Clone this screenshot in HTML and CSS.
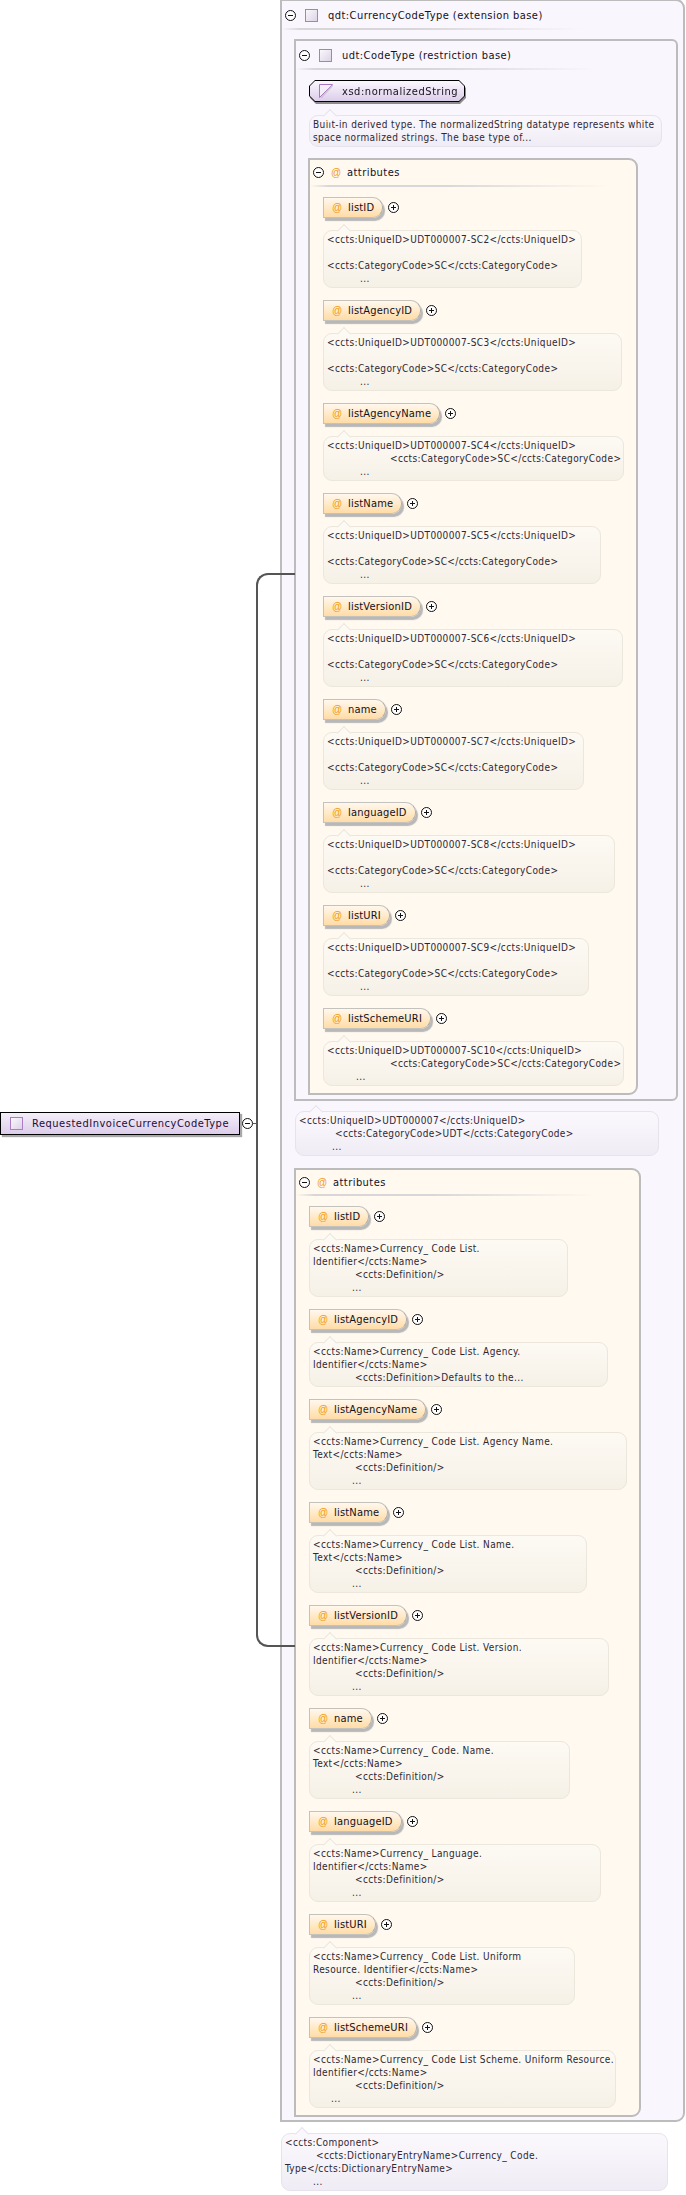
FILE: index.html
```html
<!DOCTYPE html>
<html lang="en">
<head>
<meta charset="utf-8">
<title>RequestedInvoiceCurrencyCodeType</title>
<link rel="stylesheet" href="styles.css">
</head>
<body>
<div class="canvas">
  <div class="root-col">
    <div class="root-row">
      <div class="root-node"><span class="sq"></span><span>RequestedInvoiceCurrencyCodeType</span></div>
      <span class="tg"></span>
    </div>
  </div>
  <div class="bracket"></div>
  <div class="tick"></div>

  <div class="tree-col">
    <div class="box outer">
      <div class="hdr"><span class="tg"></span><span class="sq"></span><span>qdt:CurrencyCodeType (extension base)</span></div>

      <div class="box udt">
        <div class="hdr"><span class="tg"></span><span class="sq"></span><span>udt:CodeType (restriction base)</span></div>
        <div class="simple">
          <div class="simple-edge"><div class="simple-in">
            <svg class="simple-ic" width="14" height="14" viewBox="0 0 14 14"><path d="M.5.5H13.5L.5 13.5Z" fill="#f3eef8" stroke="#a877c0"/><path d="M14 1 2 14" stroke="#c9c2cf" stroke-width="1.5"/></svg>
            <span>xsd:normalizedString</span>
          </div></div>
        </div>
        <div class="note lilac n-xsd">
          <span class="ln">Built-in derived type. The normalizedString datatype represents white</span>
          <span class="ln">space normalized strings. The base type of...</span>
        </div>

        <div class="box attrs a1">
          <div class="hdr"><span class="tg"></span><span class="at">@</span><span>attributes</span></div>

          <div class="attr"><div class="pill"><span class="at">@</span><span>listID</span></div><span class="tg plus"></span></div>
          <div class="note w259"><span class="ln">&lt;ccts:UniqueID&gt;UDT000007-SC2&lt;/ccts:UniqueID&gt;</span><span class="ln"></span><span class="ln">&lt;ccts:CategoryCode&gt;SC&lt;/ccts:CategoryCode&gt;</span><span class="ln i33">...</span></div>

          <div class="attr"><div class="pill"><span class="at">@</span><span>listAgencyID</span></div><span class="tg plus"></span></div>
          <div class="note w299"><span class="ln">&lt;ccts:UniqueID&gt;UDT000007-SC3&lt;/ccts:UniqueID&gt;</span><span class="ln"></span><span class="ln">&lt;ccts:CategoryCode&gt;SC&lt;/ccts:CategoryCode&gt;</span><span class="ln i33">...</span></div>

          <div class="attr"><div class="pill"><span class="at">@</span><span>listAgencyName</span></div><span class="tg plus"></span></div>
          <div class="note w301"><span class="ln">&lt;ccts:UniqueID&gt;UDT000007-SC4&lt;/ccts:UniqueID&gt;</span><span class="ln i63">&lt;ccts:CategoryCode&gt;SC&lt;/ccts:CategoryCode&gt;</span><span class="ln i33">...</span></div>

          <div class="attr"><div class="pill"><span class="at">@</span><span>listName</span></div><span class="tg plus"></span></div>
          <div class="note w278"><span class="ln">&lt;ccts:UniqueID&gt;UDT000007-SC5&lt;/ccts:UniqueID&gt;</span><span class="ln"></span><span class="ln">&lt;ccts:CategoryCode&gt;SC&lt;/ccts:CategoryCode&gt;</span><span class="ln i33">...</span></div>

          <div class="attr"><div class="pill"><span class="at">@</span><span>listVersionID</span></div><span class="tg plus"></span></div>
          <div class="note w300"><span class="ln">&lt;ccts:UniqueID&gt;UDT000007-SC6&lt;/ccts:UniqueID&gt;</span><span class="ln"></span><span class="ln">&lt;ccts:CategoryCode&gt;SC&lt;/ccts:CategoryCode&gt;</span><span class="ln i33">...</span></div>

          <div class="attr"><div class="pill"><span class="at">@</span><span>name</span></div><span class="tg plus"></span></div>
          <div class="note w261"><span class="ln">&lt;ccts:UniqueID&gt;UDT000007-SC7&lt;/ccts:UniqueID&gt;</span><span class="ln"></span><span class="ln">&lt;ccts:CategoryCode&gt;SC&lt;/ccts:CategoryCode&gt;</span><span class="ln i33">...</span></div>

          <div class="attr"><div class="pill"><span class="at">@</span><span>languageID</span></div><span class="tg plus"></span></div>
          <div class="note w292"><span class="ln">&lt;ccts:UniqueID&gt;UDT000007-SC8&lt;/ccts:UniqueID&gt;</span><span class="ln"></span><span class="ln">&lt;ccts:CategoryCode&gt;SC&lt;/ccts:CategoryCode&gt;</span><span class="ln i33">...</span></div>

          <div class="attr"><div class="pill"><span class="at">@</span><span>listURI</span></div><span class="tg plus"></span></div>
          <div class="note w266"><span class="ln">&lt;ccts:UniqueID&gt;UDT000007-SC9&lt;/ccts:UniqueID&gt;</span><span class="ln"></span><span class="ln">&lt;ccts:CategoryCode&gt;SC&lt;/ccts:CategoryCode&gt;</span><span class="ln i33">...</span></div>

          <div class="attr"><div class="pill"><span class="at">@</span><span>listSchemeURI</span></div><span class="tg plus"></span></div>
          <div class="note w301"><span class="ln">&lt;ccts:UniqueID&gt;UDT000007-SC10&lt;/ccts:UniqueID&gt;</span><span class="ln i63">&lt;ccts:CategoryCode&gt;SC&lt;/ccts:CategoryCode&gt;</span><span class="ln i29">...</span></div>
        </div>
      </div>

      <div class="note lilac n-udt"><span class="ln">&lt;ccts:UniqueID&gt;UDT000007&lt;/ccts:UniqueID&gt;</span><span class="ln i36">&lt;ccts:CategoryCode&gt;UDT&lt;/ccts:CategoryCode&gt;</span><span class="ln i33">...</span></div>

      <div class="box attrs a2">
        <div class="hdr"><span class="tg"></span><span class="at">@</span><span>attributes</span></div>

        <div class="attr"><div class="pill"><span class="at">@</span><span>listID</span></div><span class="tg plus"></span></div>
        <div class="note w259"><span class="ln">&lt;ccts:Name&gt;Currency_ Code List.</span><span class="ln">Identifier&lt;/ccts:Name&gt;</span><span class="ln i42">&lt;ccts:Definition/&gt;</span><span class="ln i39">...</span></div>

        <div class="attr"><div class="pill"><span class="at">@</span><span>listAgencyID</span></div><span class="tg plus"></span></div>
        <div class="note w299"><span class="ln">&lt;ccts:Name&gt;Currency_ Code List. Agency.</span><span class="ln">Identifier&lt;/ccts:Name&gt;</span><span class="ln i42">&lt;ccts:Definition&gt;Defaults to the...</span></div>

        <div class="attr"><div class="pill"><span class="at">@</span><span>listAgencyName</span></div><span class="tg plus"></span></div>
        <div class="note w318"><span class="ln">&lt;ccts:Name&gt;Currency_ Code List. Agency Name.</span><span class="ln">Text&lt;/ccts:Name&gt;</span><span class="ln i42">&lt;ccts:Definition/&gt;</span><span class="ln i39">...</span></div>

        <div class="attr"><div class="pill"><span class="at">@</span><span>listName</span></div><span class="tg plus"></span></div>
        <div class="note w278"><span class="ln">&lt;ccts:Name&gt;Currency_ Code List. Name.</span><span class="ln">Text&lt;/ccts:Name&gt;</span><span class="ln i42">&lt;ccts:Definition/&gt;</span><span class="ln i39">...</span></div>

        <div class="attr"><div class="pill"><span class="at">@</span><span>listVersionID</span></div><span class="tg plus"></span></div>
        <div class="note w300"><span class="ln">&lt;ccts:Name&gt;Currency_ Code List. Version.</span><span class="ln">Identifier&lt;/ccts:Name&gt;</span><span class="ln i42">&lt;ccts:Definition/&gt;</span><span class="ln i39">...</span></div>

        <div class="attr"><div class="pill"><span class="at">@</span><span>name</span></div><span class="tg plus"></span></div>
        <div class="note w261"><span class="ln">&lt;ccts:Name&gt;Currency_ Code. Name.</span><span class="ln">Text&lt;/ccts:Name&gt;</span><span class="ln i42">&lt;ccts:Definition/&gt;</span><span class="ln i39">...</span></div>

        <div class="attr"><div class="pill"><span class="at">@</span><span>languageID</span></div><span class="tg plus"></span></div>
        <div class="note w292"><span class="ln">&lt;ccts:Name&gt;Currency_ Language.</span><span class="ln">Identifier&lt;/ccts:Name&gt;</span><span class="ln i42">&lt;ccts:Definition/&gt;</span><span class="ln i39">...</span></div>

        <div class="attr"><div class="pill"><span class="at">@</span><span>listURI</span></div><span class="tg plus"></span></div>
        <div class="note w266"><span class="ln">&lt;ccts:Name&gt;Currency_ Code List. Uniform</span><span class="ln">Resource. Identifier&lt;/ccts:Name&gt;</span><span class="ln i42">&lt;ccts:Definition/&gt;</span><span class="ln i39">...</span></div>

        <div class="attr"><div class="pill"><span class="at">@</span><span>listSchemeURI</span></div><span class="tg plus"></span></div>
        <div class="note w307"><span class="ln">&lt;ccts:Name&gt;Currency_ Code List Scheme. Uniform Resource.</span><span class="ln">Identifier&lt;/ccts:Name&gt;</span><span class="ln i42">&lt;ccts:Definition/&gt;</span><span class="ln i18">...</span></div>
      </div>
    </div>

    <div class="note lilac n-end"><span class="ln">&lt;ccts:Component&gt;</span><span class="ln i31">&lt;ccts:DictionaryEntryName&gt;Currency_ Code.</span><span class="ln">Type&lt;/ccts:DictionaryEntryName&gt;</span><span class="ln i28">...</span></div>
  </div>
</div>
</body>
</html>
```
FILE: styles.css
```css
* { box-sizing: border-box; }

html, body { margin: 0; padding: 0; background: #fff; }

body {
  width: 686px;
  height: 2195px;
  overflow: hidden;
  font-family: "DejaVu Sans Condensed", "DejaVu Sans", sans-serif;
  font-stretch: condensed;
  color: #14101c;
}

.canvas {
  position: relative;
  display: flex;
  height: 2195px;
  overflow: hidden;
}

/* left: root element */
.root-col { width: 280px; flex: none; padding-top: 1112px; }
.root-row { display: flex; align-items: flex-start; }
.root-node {
  width: 240px;
  height: 23px;
  display: flex;
  align-items: center;
  gap: 9px;
  padding-left: 9px;
  border: 1px solid #000;
  background: linear-gradient(#f4eff8, #dccdea);
  box-shadow: 2px 2px 1px #a8a8a8;
  font-size: 11px;
  letter-spacing: .52px;
  color: #1c0c38;
}
.root-row .tg { margin: 6px 0 0 2px; }

/* connector */
.bracket {
  position: absolute;
  left: 256px;
  top: 573px;
  width: 39px;
  height: 1074px;
  border: 2px solid #555;
  border-right: 0;
  border-radius: 12px 0 0 12px;
  z-index: 3;
}
.tick {
  position: absolute;
  left: 253px;
  top: 1123px;
  width: 4px;
  height: 1px;
  background: #555;
}

/* boxes */
.tree-col { width: 406px; flex: none; margin-top: -1px; }

.box {
  border: 2px solid #bcbcbc;
  background: #f9f6fd;
}
.outer {
  width: 405px;
  height: 2123px;
  padding: 0 0 0 12px;
  border-radius: 0 9px 9px 0;
}
.udt {
  width: 384px;
  margin-top: 9px;
  padding: 0 0 4px 13px;
  border-radius: 0 6px 6px 0;
}
.attrs {
  background: #fff9f0;
  border-radius: 0 9px 9px 0;
}
.a1 { width: 330px; margin: 11px 0 0 -1px; padding: 0 0 0 13px; }
.a2 { width: 347px; margin-top: 12px; padding: 0 0 0 13px; }

.hdr {
  height: 29px;
  margin-left: -12px;
  padding: 0 0 1px 3px;
  display: flex;
  align-items: center;
  font-size: 11px;
  letter-spacing: .45px;
  background: linear-gradient(90deg, transparent, #d8d6d8 6%, #d8d6d8 45%, transparent) no-repeat 0 100% / 300px 2px;
}
.udt > .hdr { margin-left: -13px; margin-bottom: 10px; }
.attrs > .hdr {
  margin-left: -13px;
  margin-bottom: 10px;
  height: 27px;
  padding-bottom: 3px;
}
.a2 > .hdr { height: 26px; margin-bottom: 10px; padding-bottom: 2px; }
.hdr .sq { margin: 0 10px 0 9px; }
.hdr .at { margin: 0 6px 0 7px; }

/* icons */
.sq {
  flex: none;
  display: block;
  width: 13px;
  height: 13px;
  border: 1px solid #ad7cc6;
  background: linear-gradient(135deg, #faf8fc, #dcd3e6);
}

.tg {
  flex: none;
  display: block;
  position: relative;
  width: 11px;
  height: 11px;
  border: 1px solid #111;
  border-radius: 50%;
  background: #fff;
}
.tg::before {
  content: "";
  position: absolute;
  left: 2px;
  top: 4px;
  width: 5px;
  height: 1px;
  background: #111;
}
.plus::after {
  content: "";
  position: absolute;
  left: 4px;
  top: 2px;
  width: 1px;
  height: 5px;
  background: #111;
}

.at {
  flex: none;
  width: 10px;
  text-align: center;
  color: #f09a12;
  font-family: "Liberation Sans", sans-serif;
  font-stretch: normal;
  font-size: 10px;
  letter-spacing: 0;
}

/* simple type pill */
.simple {
  width: 156px;
  height: 22px;
  filter: drop-shadow(1px 2px 0 #8c8c8c);
}
.simple-edge {
  height: 22px;
  padding: 1px;
  background: #000;
  clip-path: polygon(6px 0, calc(100% - 6px) 0, 100% 6px, 100% calc(100% - 6px), calc(100% - 6px) 100%, 6px 100%, 0 calc(100% - 6px), 0 6px);
}
.simple-in {
  height: 20px;
  display: flex;
  align-items: center;
  gap: 9px;
  padding-left: 9px;
  background: linear-gradient(#fbf8fd, #dccdea);
  clip-path: polygon(5px 0, calc(100% - 5px) 0, 100% 5px, 100% calc(100% - 5px), calc(100% - 5px) 100%, 5px 100%, 0 calc(100% - 5px), 0 5px);
  font-size: 11px;
  letter-spacing: .55px;
}
.simple-ic { flex: none; display: block; }

/* attribute row */
.attr { display: flex; align-items: center; height: 21px; }
.pill {
  height: 21px;
  display: flex;
  align-items: center;
  padding: 0 8px 0 8px;
  border: 1px solid #c4c2bc;
  border-right-color: #b0aeaa;
  border-radius: 0 10px 10px 0;
  background: linear-gradient(#fff8ee, #ffdca6);
  box-shadow: 2px 3px 1px #b8b8b8;
  font-size: 11px;
  letter-spacing: .2px;
}
.pill .at { margin-right: 6px; }
.attr .tg { margin-left: 5px; }

/* notes */
.note {
  position: relative;
  padding: 2px 0 2px 3px;
  border: 1px solid #ebe7dd;
  border-radius: 9px;
  margin: 12px 0;
  background: linear-gradient(#fdfaf4, #f6f1e7);
  font-size: 10px;
  line-height: 13px;
  letter-spacing: .38px;
  color: #2e2733;
}
.note::before {
  content: "";
  position: absolute;
  left: 15px;
  top: -5px;
  width: 9px;
  height: 9px;
  background: #fdfaf4;
  border: 1px solid #ebe7dd;
  border-right: 0;
  border-bottom: 0;
  transform: rotate(45deg);
}
.note.lilac {
  background: linear-gradient(#fbf8fd, #f0ecf5);
  border-color: #e7e3ec;
}
.note.lilac::before { background: #fbf8fd; border-color: #e7e3ec; }

.ln { display: block; height: 13px; white-space: pre; }
.i18 { padding-left: 18px; }
.i28 { padding-left: 28px; }
.i29 { padding-left: 29px; }
.i31 { padding-left: 31px; }
.i33 { padding-left: 33px; }
.i36 { padding-left: 36px; }
.i39 { padding-left: 39px; }
.i42 { padding-left: 42px; }
.i63 { padding-left: 63px; }

.w259 { width: 259px; }
.w261 { width: 261px; }
.w266 { width: 266px; }
.w278 { width: 278px; }
.w292 { width: 292px; }
.w299 { width: 299px; }
.w300 { width: 300px; }
.w301 { width: 301px; }
.w307 { width: 307px; }
.w318 { width: 318px; }

.attrs > .note:last-child { margin-bottom: 7px; }

.n-xsd { width: 353px; margin: 13px 0 11px; }
.n-udt { width: 364px; margin: 10px 0 0 1px; }
.n-end { width: 387px; margin: 11px 0 0 1px; }
```
